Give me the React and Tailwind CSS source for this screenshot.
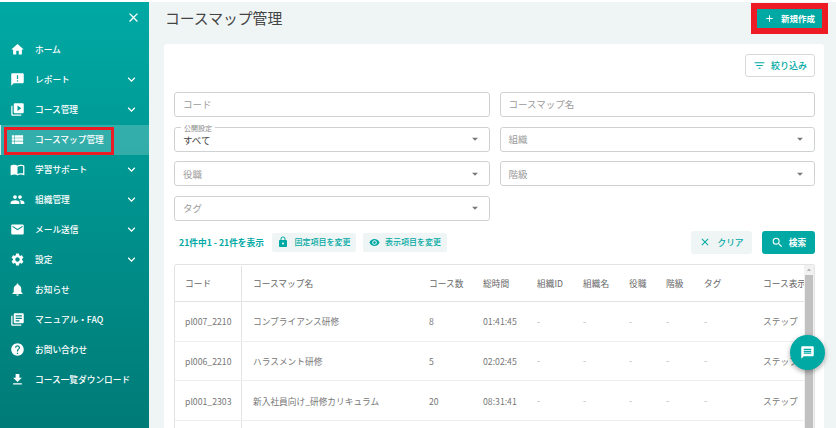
import React from "react";
import {
    MdHome,
    MdAnnouncement,
    MdVideoLibrary,
    MdViewList,
    MdImportContacts,
    MdPeople,
    MdEmail,
    MdSettings,
    MdNotifications,
    MdLibraryBooks,
    MdHelp,
    MdFileDownload,
    MdExpandMore,
    MdClose,
    MdAdd,
    MdFilterList,
    MdLock,
    MdVisibility,
    MdSearch,
    MdMessage,
    MdArrowDropDown,
    MdArrowDropUp,
} from "react-icons/md";

const menu = [
    { icon: MdHome, label: "ホーム" },
    { icon: MdAnnouncement, label: "レポート", arrow: true },
    { icon: MdVideoLibrary, label: "コース管理", arrow: true },
    { icon: MdViewList, label: "コースマップ管理", active: true },
    { icon: MdImportContacts, label: "学習サポート", arrow: true },
    { icon: MdPeople, label: "組織管理", arrow: true },
    { icon: MdEmail, label: "メール送信", arrow: true },
    { icon: MdSettings, label: "設定", arrow: true },
    { icon: MdNotifications, label: "お知らせ" },
    { icon: MdLibraryBooks, label: "マニュアル・FAQ" },
    { icon: MdHelp, label: "お問い合わせ" },
    { icon: MdFileDownload, label: "コース一覧ダウンロード" },
];

const rows = [
    ["pl007_2210", "コンプライアンス研修", "8", "01:41:45"],
    ["pl006_2210", "ハラスメント研修", "5", "02:02:45"],
    ["pl001_2303", "新入社員向け_研修カリキュラム", "20", "08:31:41"],
];

const gridCols =
    "grid grid-cols-[67px_187px_54px_54px_46px_46px_37px_38px_59px_60px]";

const MenuItem = ({ item }) => {
    const Icon = item.icon;
    return (
        <div
            className={
                "relative flex h-[30px] items-center pb-px text-white " +
                (item.active
                    ? "bg-white/20 border-l border-[#cfeeed]"
                    : "")
            }
        >
            <div
                className={
                    "flex shrink-0 justify-center " +
                    (item.active ? "w-[34px] pr-px" : "w-[35px]")
                }
            >
                <Icon className="text-[15px]" />
            </div>
            <span className="text-[8.7px] font-medium whitespace-nowrap">
                {item.label}
            </span>
            {item.arrow && (
                <MdExpandMore className="absolute left-[124px] text-[15px]" />
            )}
            {item.active && (
                <span className="absolute left-[3px] top-[2px] h-[28px] w-[110px] border-[3px] border-[#ed1c24]" />
            )}
        </div>
    );
};

const Field = ({ label, legend, value, select }) => (
    <div className="relative flex h-[25px] items-center justify-between rounded-[3px] border border-[#cfd2d2] bg-white pl-[8px] pr-[7px]">
        {legend && (
            <span className="absolute left-[6px] top-[-4px] bg-white px-[3px] text-[7px] leading-[8px] text-[#8a8a8a]">
                {legend}
            </span>
        )}
        {value ? (
            <span className="pt-[2px] text-[9.5px] text-[#444]">{value}</span>
        ) : (
            <span className="text-[9.5px] text-[#9a9a9a]">{label}</span>
        )}
        {select && (
            <MdArrowDropDown className="text-[14px] text-[#777]" />
        )}
    </div>
);

const App = () => {
    return (
        <div className="flex h-[428px] w-[836px] overflow-hidden bg-white pt-[2px] font-['Noto_Sans_CJK_JP','Noto_Sans',sans-serif]">
            <aside className="flex w-[149px] shrink-0 flex-col bg-gradient-to-b from-[#00a9a4] to-[#007b77]">
                <div className="flex h-[33px] items-center justify-end pr-[8px] pb-[2px] text-white">
                    <MdClose className="text-[15px]" />
                </div>
                {menu.map((item) => (
                    <MenuItem key={item.label} item={item} />
                ))}
            </aside>

            <main className="relative flex min-w-0 flex-1 flex-col bg-[#eff5f5] pl-[15px] pr-[12px]">
                <header className="flex h-[42px] shrink-0 items-start justify-between">
                    <h1 className="pl-px pt-[4px] text-[14.8px] leading-[24px] text-[#444]">
                        コースマップ管理
                    </h1>
                    <div className="mt-px mr-[-4px] border-[6px] border-[#ed1c24]">
                        <button className="flex h-[19px] w-[65px] items-center justify-center gap-[6px] bg-[#00a9a4] text-white">
                            <MdAdd className="text-[11px]" />
                            <span className="text-[8.5px] font-bold">新規作成</span>
                        </button>
                    </div>
                </header>

                <section className="min-h-0 flex-1 overflow-hidden rounded-t-[3px] bg-white pl-[10px] pr-[9px] pt-[10px]">
                    <div className="flex justify-end">
                        <button className="flex h-[23px] w-[70px] items-center justify-center gap-[5px] rounded-[3px] border border-[#d5d9d9] text-[#00a9a4]">
                            <MdFilterList className="text-[13px]" />
                            <span className="text-[9px] font-medium">絞り込み</span>
                        </button>
                    </div>

                    <div className="mt-[15px] grid grid-cols-2 gap-x-[10px] gap-y-[9.67px]">
                        <Field label="コード" />
                        <Field label="コースマップ名" />
                        <Field legend="公開設定" value="すべて" select />
                        <Field label="組織" select />
                        <Field label="役職" select />
                        <Field label="階級" select />
                        <Field label="タグ" select />
                    </div>

                    <div className="mt-[10px] flex h-[23px] items-center">
                        <span className="ml-[5px] text-[8.7px] font-bold text-[#00a9a4]">
                            21件中1 - 21件を表示
                        </span>
                        <button className="ml-[8px] flex h-[19px] w-[84px] items-center justify-center gap-[5px] rounded-[2px] bg-[#eff5f5] text-[#00a9a4]">
                            <MdLock className="text-[12px]" />
                            <span className="text-[8px] font-medium">固定項目を変更</span>
                        </button>
                        <button className="ml-[7px] flex h-[19px] w-[84px] items-center justify-center gap-[5px] rounded-[2px] bg-[#eff5f5] text-[#00a9a4]">
                            <MdVisibility className="text-[11px]" />
                            <span className="text-[8px] font-medium">表示項目を変更</span>
                        </button>
                        <button className="ml-auto flex h-[23px] w-[61px] items-center justify-center gap-[6px] rounded-[3px] bg-[#eff5f5] text-[#00a9a4]">
                            <MdClose className="text-[12px]" />
                            <span className="text-[8.7px] font-medium">クリア</span>
                        </button>
                        <button className="ml-[10px] flex h-[23px] w-[53px] items-center justify-center gap-[5px] rounded-[3px] bg-[#00a9a4] text-white">
                            <MdSearch className="text-[13px]" />
                            <span className="text-[8.7px] font-bold">検索</span>
                        </button>
                    </div>

                    <div className="mt-[10px] flex h-[200px] overflow-hidden rounded-t-[3px] border border-b-0 border-[#e2e4e4]">
                        <div className="min-w-0 flex-1 overflow-hidden">
                            <div className={gridCols + " h-[37px] w-[650px] items-center border-b border-[#e2e4e4] pt-px text-[8.7px] text-[#666]"}>
                                <div className="flex h-full items-center border-r border-[#e2e4e4] pl-[10px]">
                                    コード
                                </div>
                                <div className="pl-[11px]">コースマップ名</div>
                                <div>コース数</div>
                                <div>総時間</div>
                                <div>組織ID</div>
                                <div>組織名</div>
                                <div>役職</div>
                                <div>階級</div>
                                <div>タグ</div>
                                <div className="whitespace-nowrap">コース表示</div>
                            </div>
                            {rows.map((row) => (
                                <div
                                    key={row[0]}
                                    className={gridCols + " h-[39.67px] w-[650px] items-center border-b border-[#eeeeee] text-[8.7px] text-[#777]"}
                                >
                                    <div className="flex h-full items-center border-r border-[#e2e4e4] pl-[10px] pt-px">
                                        {row[0]}
                                    </div>
                                    <div className="pl-[11px] pt-px">{row[1]}</div>
                                    <div className="pt-px">{row[2]}</div>
                                    <div className="pt-px">{row[3]}</div>
                                    <div className="text-[#aaa]">-</div>
                                    <div className="text-[#aaa]">-</div>
                                    <div className="text-[#aaa]">-</div>
                                    <div className="text-[#aaa]">-</div>
                                    <div className="text-[#aaa]">-</div>
                                    <div className="pt-px">ステップ</div>
                                </div>
                            ))}
                            <div className="h-[40px] w-[67px] border-r border-[#e2e4e4]" />
                        </div>
                        <div className="flex w-[10px] shrink-0 flex-col bg-[#f1f1f1]">
                            <MdArrowDropUp className="h-[10px] w-[10px] text-[#a3a3a3]" />
                            <div className="w-[8px] flex-1 self-center bg-[#c1c1c1]" />
                        </div>
                    </div>
                </section>

                <button className="absolute left-[640.5px] top-[333px] flex h-[35px] w-[35px] items-center justify-center rounded-full bg-[#00a9a4] text-white shadow-[0_2px_5px_rgba(0,0,0,0.35)]">
                    <MdMessage className="text-[15px]" />
                </button>
            </main>
        </div>
    );
};

export default App;
